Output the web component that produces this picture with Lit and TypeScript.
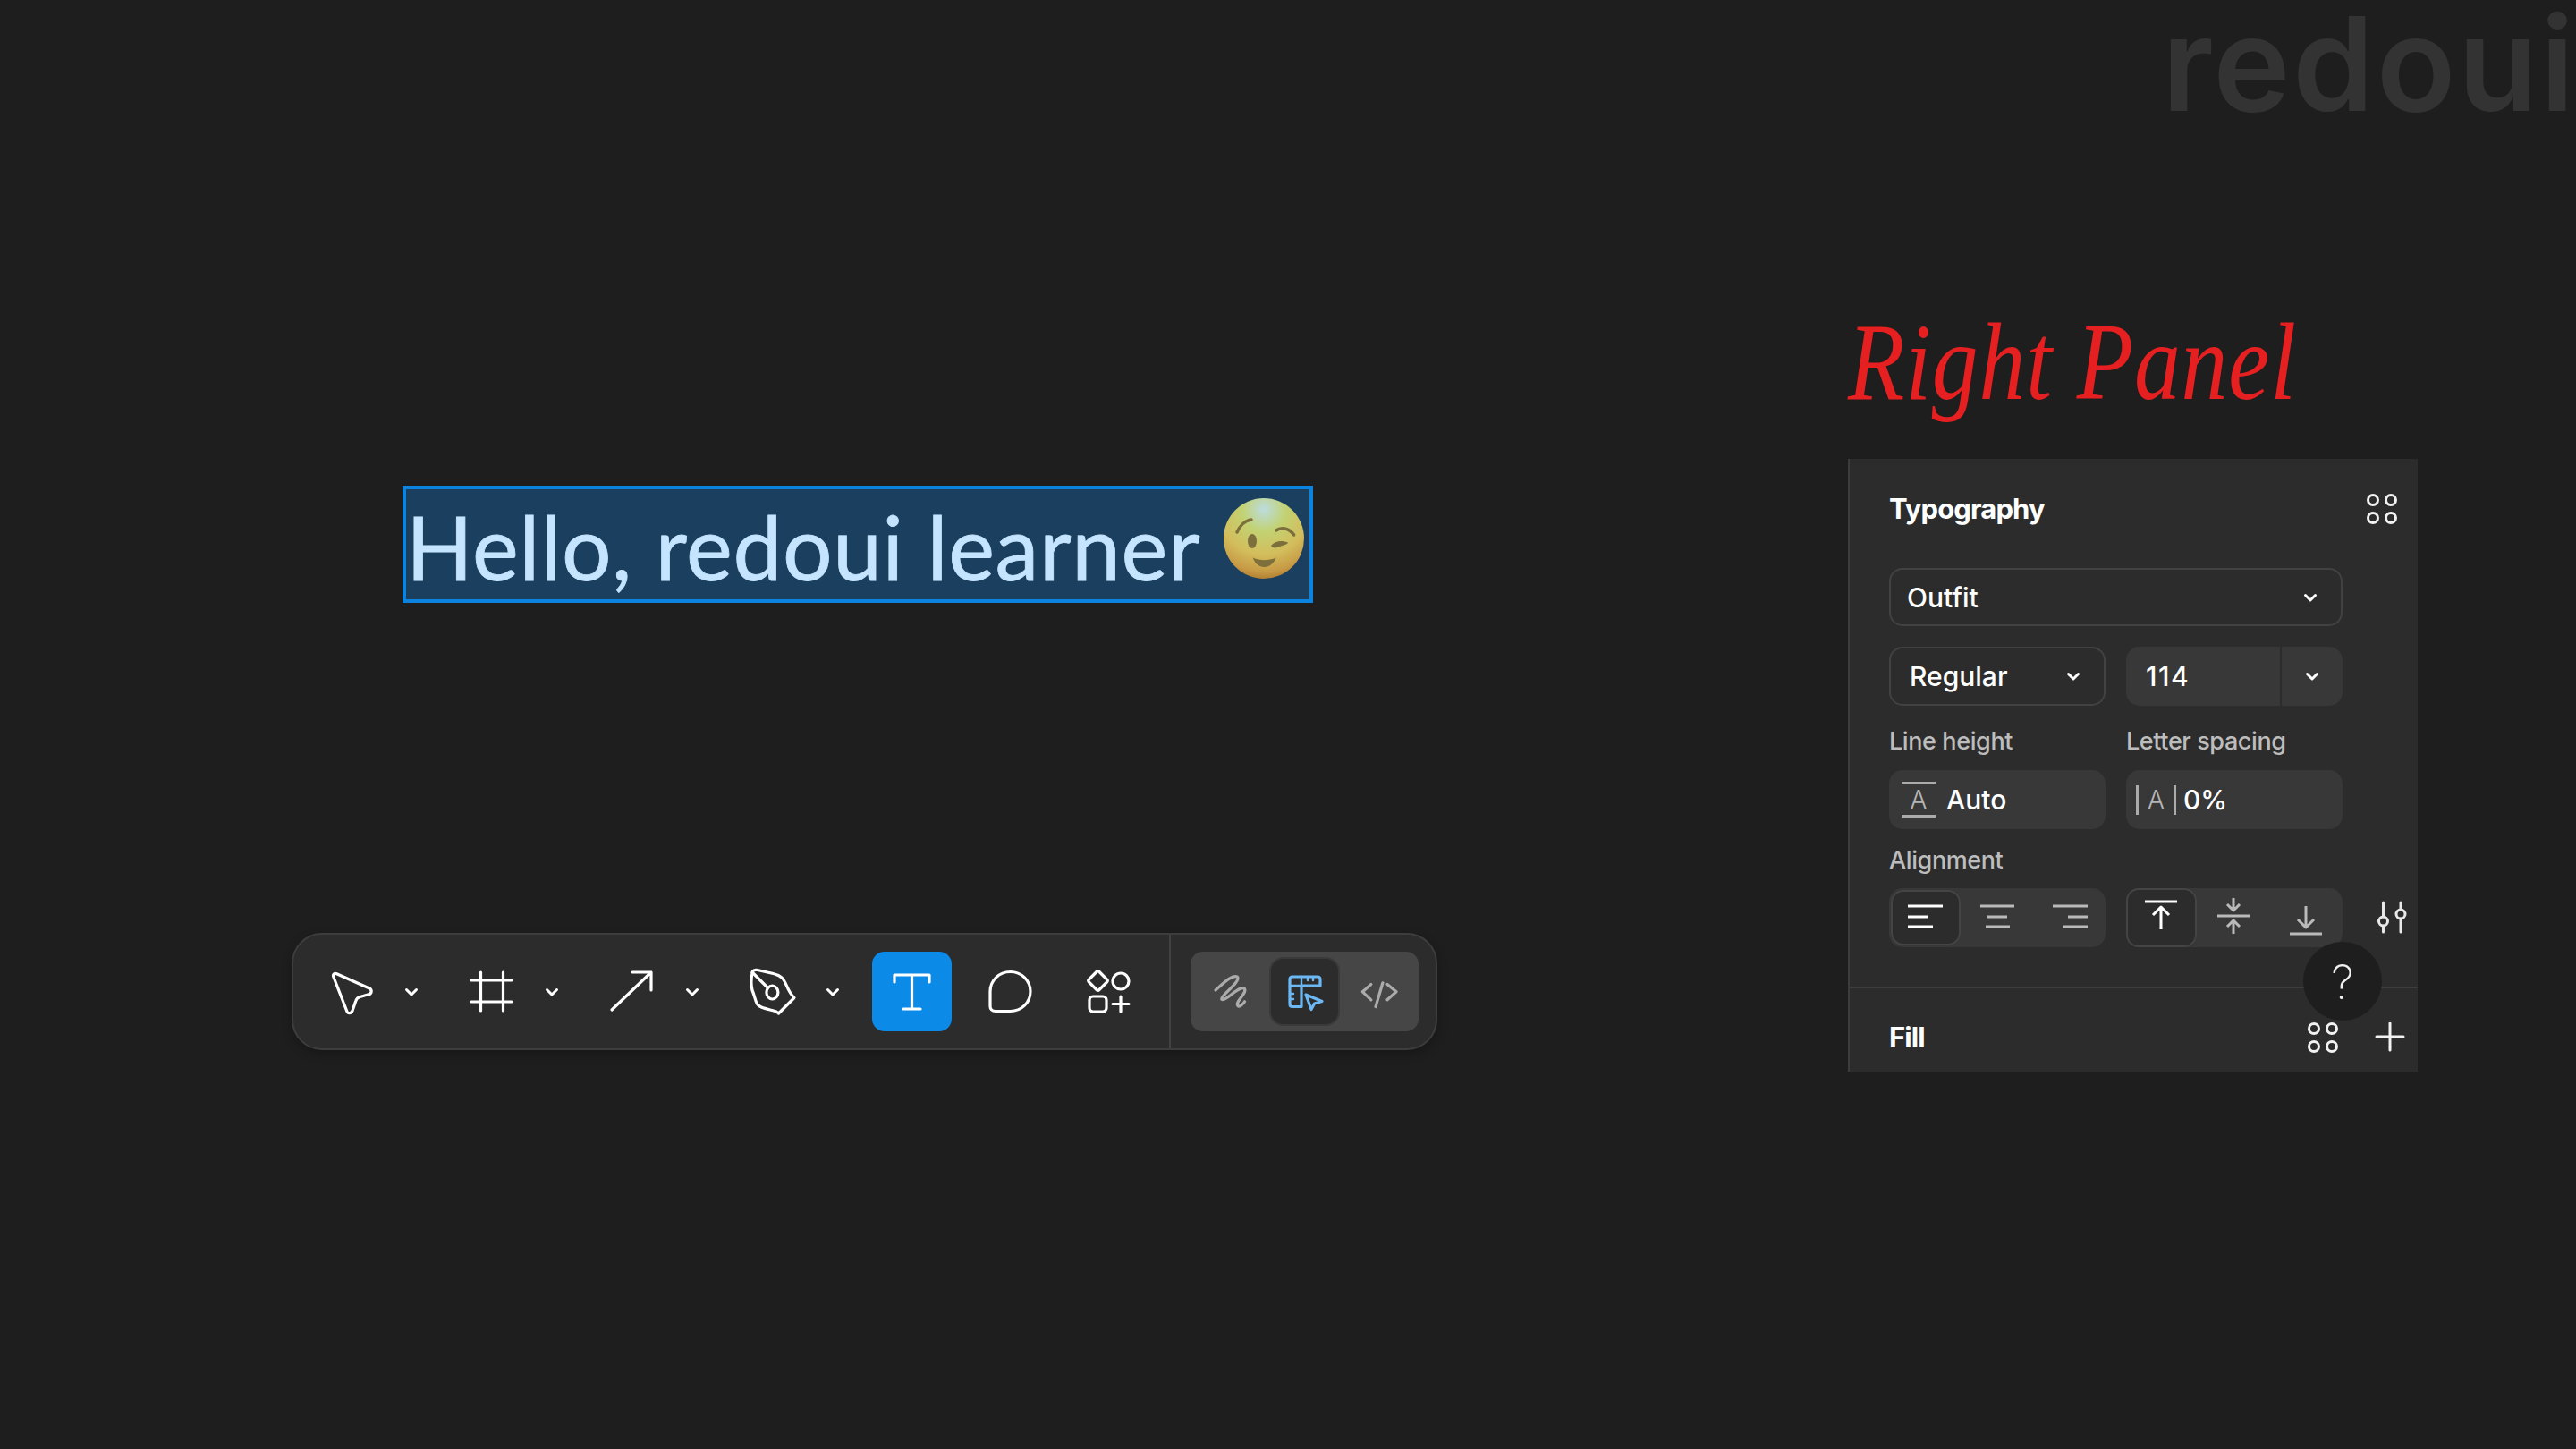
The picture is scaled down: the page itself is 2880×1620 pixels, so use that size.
import { LitElement, html, css, svg } from "lit";
import { customElement } from "lit/decorators.js";

const chevron = html`<svg class="chev" viewBox="0 0 24 24"><path d="M6.5 9.5L12 15L17.5 9.5" /></svg>`;

const dots = html`<svg class="dots" viewBox="0 0 34 34">
  <circle cx="7" cy="7" r="5.5" /><circle cx="27" cy="7" r="5.5" />
  <circle cx="7" cy="27" r="5.5" /><circle cx="27" cy="27" r="5.5" />
</svg>`;

function toolIcon(body: unknown) {
  return html`<svg class="tool" viewBox="0 0 56 56">${body}</svg>`;
}

function alignIcon(body: unknown) {
  return html`<svg class="align" viewBox="0 0 44 44">${body}</svg>`;
}

const pointer = svg`<path d="M8 11.5C6.6 8.5 8.8 6.6 11.5 7.8L48 24C51.5 26 50.5 30 47 30.8L37.5 33.5C35 34.2 33.5 35.5 32.8 38L29 49C27.5 52.5 24 52.5 22.8 49.5Z" />`;
const frame = svg`<path d="M15.5 6V49M40.5 6V49M5 15H50M5 39H50" />`;
const arrow = svg`<path d="M5 48L49 6M28 6H49V26" />`;
const pen = svg`<path d="M5 7C5 4 8 3 11 3.5L24 6.5C33 8.5 38 10 41 16C44 21 45 28 52 34.5L34.5 52C32 49 29 49 25 48C17 46 13 45 10.5 41.5C8 37 8 33 5 26C3.5 20 4 12 5 7Z" /><path d="M5 6L22 23" /><ellipse cx="27.4" cy="28.5" rx="6.5" ry="7.5" />`;
const serifT = svg`<path d="M8 17V9H47V17M27.5 9V47M18 47H37" />`;
const bubble = svg`<path d="M5 27.5C5 15 15 5.5 27.5 5.5C40 5.5 50 15 50 27.5C50 40 40 49.5 27.5 49.5H11C7 49.5 5 47 5 44Z" />`;
const shapes = svg`<path d="M14 5.5Q15.5 4 17 5.5L25.5 14Q27 15.5 25.5 17L17 25.5Q15.5 27 14 25.5L5.5 17Q4 15.5 5.5 14Z" /><circle cx="41" cy="16" r="9" /><rect x="6" y="33" width="19" height="17" rx="4" /><path d="M32 41.5H50M41 33V50" />`;
const scribble = svg`<path d="M11 26C20 18 30 8 35.4 11.2C40 16 16 33 17.8 36.2C22 39.5 38 19.5 43.5 24.5C46.4 29.5 32 39.5 36 43.5C38 45.5 42 41 43.5 38.8" />`;
const ruler = svg`<path d="M14 11H42Q45 11 45 14V21H24V44.5H14Q11 44.5 11 41.5V14Q11 11 14 11Z" /><path d="M11 21H24V11" stroke-width="2.4" /><path d="M31 12V15M37 12V15M12 30H15M12 36H15" stroke-width="2.4" /><path d="M29 31L47 38.5L38.5 41L35 47.5Z" />`;
const code = svg`<path d="M18.8 19.5L9.4 27.8L18.8 36.8M37 19.5L47 27.8L37 36.8M31.9 17.8L24 44.5" />`;

@customElement("app-root")
class AppRoot extends LitElement {
  static styles = css`
    :host {
      display: block;
      width: 2880px;
      height: 1620px;
      position: relative;
      overflow: hidden;
      background: #1e1e1e;
      font-family: Inter, "Liberation Sans", sans-serif;
      color: #fff;
    }

    svg {
      display: block;
      flex: none;
      fill: none;
      stroke-linecap: round;
      stroke-linejoin: round;
    }

    .page {
      display: flex;
      height: 100%;
    }

    .watermark {
      position: absolute;
      left: 2417px;
      top: 12px;
      font-size: 146px;
      line-height: 118px;
      font-weight: 600;
      letter-spacing: 2.5px;
      color: #333;
    }

    /* canvas side */
    .canvas {
      width: 2066px;
      flex: none;
      padding: 543px 0 0 326px;
      box-sizing: border-box;
    }

    .selection {
      width: 1018px;
      height: 131px;
      margin-left: 124px;
      box-sizing: border-box;
      padding: 0 6px;
      border: 4px solid #0c83df;
      background: #1b3f5f;
      display: flex;
      align-items: center;
      justify-content: space-between;
    }

    .hello {
      font-family: Lato, "Noto Sans", sans-serif;
      font-size: 98px;
      line-height: 120px;
      color: #c5e4ff;
      -webkit-text-stroke: 0.8px #c5e4ff;
      letter-spacing: 0.65px;
      white-space: nowrap;
      margin: 4px 0 0 -6px;
    }

    .emoji {
      width: 90px;
      height: 90px;
      margin-bottom: 13px;
    }

    .emoji .mark {
      stroke: #7c6f3c;
      stroke-width: 3.5;
    }

    .emoji .fill {
      fill: #7c6f3c;
    }

    .toolbar {
      width: 1281px;
      height: 131px;
      margin-top: 369px;
      box-sizing: border-box;
      display: flex;
      align-items: center;
      padding-left: 37px;
      border: 2px solid #3d3d3d;
      border-radius: 34px;
      background: #2c2c2c;
      box-shadow: 0 4px 12px rgba(0, 0, 0, 0.25);
    }

    .tool {
      width: 56px;
      height: 56px;
      stroke: #fff;
      stroke-width: 3.2;
    }

    .chev {
      width: 24px;
      height: 24px;
      stroke: #fff;
      stroke-width: 3;
    }

    .toolgroup {
      display: flex;
      align-items: center;
      gap: 27px;
      margin-right: 50px;
    }

    .toolgroup.last {
      margin-right: 32px;
    }

    .text-tool {
      width: 89px;
      height: 89px;
      display: flex;
      align-items: center;
      justify-content: center;
      border-radius: 14px;
      background: #0c8ae8;
      margin-right: 38px;
    }

    .shapes {
      margin-left: 54px;
    }

    .tb-divider {
      align-self: stretch;
      width: 2px;
      background: #424242;
      margin: 0 22px 0 39px;
    }

    .modes {
      width: 255px;
      height: 89px;
      box-sizing: border-box;
      padding: 8px 7px;
      display: flex;
      gap: 8px;
      border-radius: 14px;
      background: #464646;
    }

    .mode {
      flex: 1;
      display: flex;
      align-items: center;
      justify-content: center;
      border-radius: 14px;
    }

    .mode.active {
      background: #2c2c2c;
      box-shadow: 0 0 0 2px #3a3a3a;
    }

    .mode .tool {
      stroke: #ababab;
      stroke-width: 3.2;
    }

    .mode.active .tool {
      stroke: #6cb8f5;
    }

    /* right side */
    .side {
      width: 637px;
      flex: none;
    }

    .note {
      height: 169px;
      margin-top: 344px;
      font-family: "Liberation Serif", serif;
      font-style: italic;
      font-size: 122px;
      line-height: 122px;
      letter-spacing: 1px;
      color: #e62020;
      white-space: nowrap;
      transform: scaleX(0.85);
      transform-origin: left top;
    }

    .panel {
      position: relative;
      height: 685px;
      box-sizing: border-box;
      border-left: 2px solid #3c3c3c;
      background: #2c2c2c;
    }

    .section {
      padding: 39px 0 0 44px;
    }

    .section + .section {
      border-top: 2px solid #3d3d3d;
      margin-top: 44px;
      padding-top: 38px;
    }

    .head {
      display: flex;
      align-items: center;
      justify-content: space-between;
      font-size: 31px;
      font-weight: 700;
      letter-spacing: -0.9px;
      line-height: 34px;
    }

    .typo-head {
      width: 568px;
    }

    .fill-head {
      width: 577px;
    }

    .fill-actions {
      display: flex;
      align-items: center;
      gap: 41px;
    }

    .dots {
      width: 34px;
      height: 34px;
      stroke: #f2f2f2;
      stroke-width: 3;
    }

    .plus {
      width: 34px;
      height: 34px;
      stroke: #f2f2f2;
      stroke-width: 3;
    }

    .row {
      display: flex;
      gap: 23px;
      width: 507px;
    }

    .select,
    .field {
      height: 66px;
      box-sizing: border-box;
      display: flex;
      align-items: center;
      font-size: 30px;
      font-weight: 500;
      border-radius: 15px;
    }

    .select {
      justify-content: space-between;
      border: 2px solid #424242;
      padding-left: 21px;
      padding-right: 22px;
    }

    .select.font {
      width: 507px;
      height: 65px;
      margin-top: 49px;
      margin-bottom: 23px;
      padding-left: 18px;
      padding-right: 22px;
    }

    .select.weight {
      width: 242px;
      padding-right: 22px;
    }

    .size {
      width: 242px;
      height: 66px;
      box-sizing: border-box;
      display: flex;
      border-radius: 15px;
      background: #383838;
      font-size: 30px;
      font-weight: 500;
    }

    .size-value {
      flex: 1;
      display: flex;
      align-items: center;
      padding-left: 22px;
      letter-spacing: 1.5px;
      border-right: 2px solid #2c2c2c;
    }

    .size-arrow {
      width: 68px;
      display: flex;
      align-items: center;
      justify-content: center;
    }

    .col {
      width: 242px;
    }

    .label {
      font-size: 27px;
      line-height: 32px;
      font-weight: 500;
      letter-spacing: -0.4px;
      color: #bdbdbd;
      margin-bottom: 16px;
    }

    .metrics {
      margin-top: 24px;
    }

    .field {
      background: #383838;
    }

    .lh-icon {
      width: 38px;
      height: 40px;
      margin: 0 12px 0 14px;
      box-sizing: border-box;
      border-top: 3px solid #ababab;
      border-bottom: 3px solid #ababab;
      display: flex;
      align-items: center;
      justify-content: center;
      font-size: 28px;
      font-weight: 300;
      color: #b5b5b5;
    }

    .ls-icon {
      width: 45px;
      height: 33px;
      margin: 0 8px 0 11px;
      box-sizing: border-box;
      border-left: 3px solid #ababab;
      border-right: 3px solid #ababab;
      display: flex;
      align-items: center;
      justify-content: center;
      font-size: 28px;
      font-weight: 300;
      color: #b5b5b5;
    }

    .alignment {
      margin-top: 19px;
    }

    .alignment .label {
      margin-bottom: 15px;
    }

    .align-row {
      display: flex;
      align-items: center;
    }

    .align-row .sliders {
      width: 36px;
      height: 44px;
      margin-left: 38px;
      stroke: #e8e8e8;
      stroke-width: 3;
    }

    .seg {
      width: 242px;
      height: 66px;
      box-sizing: border-box;
      display: flex;
      gap: 3px;
      padding: 2px 0 2px 2px;
      border-radius: 15px;
      background: #383838;
    }

    .seg.vert {
      gap: 2px;
      padding: 0 2px 0 0;
      align-items: stretch;
    }

    .seg-item {
      flex: 1;
      display: flex;
      align-items: center;
      justify-content: center;
      border-radius: 14px;
    }

    .seg-item.active {
      background: #2c2c2c;
      box-shadow: inset 0 0 0 2px #444;
    }

    .align {
      width: 44px;
      height: 44px;
      stroke: #bababa;
      stroke-width: 3;
      stroke-linecap: butt;
    }

    .active .align {
      stroke: #fff;
    }

    .help {
      position: absolute;
      left: 507px;
      top: 540px;
      width: 88px;
      height: 88px;
      box-sizing: border-box;
      padding-top: 4px;
      border-radius: 50%;
      background: #1e1e1e;
      display: flex;
      align-items: center;
      justify-content: center;
      font-size: 52px;
      font-weight: 200;
      line-height: 1;
      color: #f0f0f0;
    }
  `;

  render() {
    return html`
      <div class="page">
        <div class="canvas">
          <div class="selection">
            <span class="hello">Hello, redoui learner</span>
            ${this.renderEmoji()}
          </div>
          <div class="toolbar">
            <div class="toolgroup">${toolIcon(pointer)}${chevron}</div>
            <div class="toolgroup">${toolIcon(frame)}${chevron}</div>
            <div class="toolgroup">${toolIcon(arrow)}${chevron}</div>
            <div class="toolgroup last">${toolIcon(pen)}${chevron}</div>
            <div class="text-tool">${toolIcon(serifT)}</div>
            ${toolIcon(bubble)}
            <div class="shapes">${toolIcon(shapes)}</div>
            <div class="tb-divider"></div>
            <div class="modes">
              <div class="mode">${toolIcon(scribble)}</div>
              <div class="mode active">${toolIcon(ruler)}</div>
              <div class="mode">${toolIcon(code)}</div>
            </div>
          </div>
        </div>
        <div class="side">
          <div class="note">Right Panel</div>
          <div class="panel">
            <div class="section">
              <div class="head typo-head"><span>Typography</span>${dots}</div>
              <div class="select font"><span>Outfit</span>${chevron}</div>
              <div class="row">
                <div class="select weight"><span>Regular</span>${chevron}</div>
                <div class="size">
                  <div class="size-value">114</div>
                  <div class="size-arrow">${chevron}</div>
                </div>
              </div>
              <div class="row metrics">
                <div class="col">
                  <div class="label">Line height</div>
                  <div class="field"><span class="lh-icon">A</span>Auto</div>
                </div>
                <div class="col">
                  <div class="label">Letter spacing</div>
                  <div class="field"><span class="ls-icon">A</span>0%</div>
                </div>
              </div>
              <div class="alignment">
                <div class="label">Alignment</div>
                <div class="align-row">
                  <div class="row">
                    <div class="seg">
                      <div class="seg-item active">
                        ${alignIcon(svg`<path d="M2 9H41M2 21H24M2 32H30" />`)}
                      </div>
                      <div class="seg-item">
                        ${alignIcon(svg`<path d="M2 9H40M9 21H32M8 32H35" />`)}
                      </div>
                      <div class="seg-item">
                        ${alignIcon(svg`<path d="M2 9H41M19 21H41M13 32H41" />`)}
                      </div>
                    </div>
                    <div class="seg vert">
                      <div class="seg-item active">
                        ${alignIcon(svg`<path d="M4 4H40M22 10V35M13 19L22 10L31 19" />`)}
                      </div>
                      <div class="seg-item">
                        ${alignIcon(svg`<path d="M4 20H40M22 0V14M15 7L22 14L29 7M22 40V25M15 32L22 25L29 32" />`)}
                      </div>
                      <div class="seg-item">
                        ${alignIcon(svg`<path d="M4 40H40M22 9V33M13 24L22 33L31 24" />`)}
                      </div>
                    </div>
                  </div>
                  <svg class="sliders" viewBox="0 0 36 44">
                    <path d="M7.5 5V21M7.5 31V38M27 5V13M27 23V38" />
                    <circle cx="7.5" cy="26" r="5" />
                    <circle cx="27" cy="18" r="5" />
                  </svg>
                </div>
              </div>
            </div>
            <div class="section">
              <div class="head fill-head">
                <span>Fill</span>
                <div class="fill-actions">
                  ${dots}
                  <svg class="plus" viewBox="0 0 34 34"><path d="M2 16H32M17 1V31" /></svg>
                </div>
              </div>
            </div>
            <div class="help">?</div>
          </div>
        </div>
      </div>
      <div class="watermark">redoui</div>
    `;
  }

  renderEmoji() {
    return html`<svg class="emoji" viewBox="0 0 90 90">
      <defs>
        <radialGradient id="face" cx="50%" cy="14%" r="90%">
          <stop offset="0" stop-color="#bcdcdf" />
          <stop offset="0.3" stop-color="#c2d273" />
          <stop offset="0.62" stop-color="#d3bd5c" />
          <stop offset="0.86" stop-color="#c79a45" />
          <stop offset="1" stop-color="#a87428" />
        </radialGradient>
      </defs>
      <circle cx="45" cy="45" r="45" fill="url(#face)" />
      <path class="mark" d="M15 38C18 31 24 25 31 24" />
      <ellipse class="fill" cx="32" cy="48" rx="5" ry="8" />
      <path class="mark" d="M58.7 36C64 32 73 33 78.7 41" />
      <path class="fill" d="M53 53C58 47 66 47 72 49.5C72 52 64 53 60 55C57 56 54 55 53 53Z" />
      <path class="fill" d="M32.7 66.5C40 70 51 70 58.7 66.5C56 73 51 77 45.5 77C40 77 35 73 32.7 66.5Z" />
    </svg>`;
  }
}
